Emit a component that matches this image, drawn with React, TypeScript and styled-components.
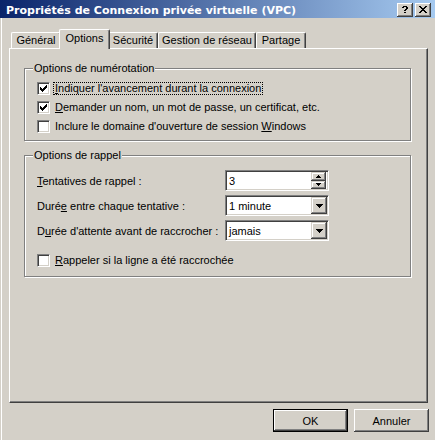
import React from "react";
import styled, { createGlobalStyle } from "styled-components";

const FACE = "#d4d0c8";
const SHADOW = "#808080";
const DARK = "#404040";
const LIGHT = "#ffffff";

const GlobalStyle = createGlobalStyle`
  html, body {
    margin: 0;
    padding: 0;
  }
  body {
    background: ${FACE};
    font-family: "Liberation Sans", Arial, sans-serif;
    font-size: 11px;
    color: #000;
  }
`;

const Window = styled.div`
  width: 435px;
  height: 440px;
  overflow: hidden;
  background: ${FACE};
  display: flex;
  flex-direction: column;
`;

const TitleBar = styled.div`
  box-sizing: border-box;
  height: 18px;
  padding: 2px 4px 0 6px;
  display: flex;
  align-items: center;
  background: linear-gradient(to right, #0a246a, #a6caf0);
  color: #fff;
`;

const TitleText = styled.div`
  flex: 1;
  font-family: "DejaVu Sans", Verdana, sans-serif;
  font-weight: bold;
  font-size: 11px;
  line-height: 13px;
  white-space: nowrap;
`;

const CaptionButtons = styled.div`
  display: flex;
  gap: 2px;
`;

const CaptionButton = styled.div`
  box-sizing: border-box;
  width: 16px;
  height: 14px;
  background: ${FACE};
  box-shadow: inset -1px -1px ${DARK}, inset 1px 1px ${LIGHT},
    inset -2px -2px ${SHADOW};
  display: flex;
  align-items: center;
  justify-content: center;
  padding-bottom: 1px;
`;

const Body = styled.div`
  flex: 1;
  padding: 11px 7px 0 9px;
  box-shadow: inset 1px 0 ${FACE}, inset 2px 0 ${LIGHT};
`;

const TabStrip = styled.div`
  display: flex;
  align-items: flex-end;
  padding-left: 2px;
`;

const Tab = styled.div<{ $active?: boolean; $w: number }>`
  box-sizing: border-box;
  position: relative;
  z-index: ${(p) => (p.$active ? 2 : 1)};
  width: ${(p) => p.$w + (p.$active ? 4 : 0)}px;
  height: ${(p) => (p.$active ? 20 : 16)}px;
  margin: 0 ${(p) => (p.$active ? -2 : 0)}px ${(p) => (p.$active ? -1 : 0)}px;
  padding-bottom: ${(p) => (p.$active ? 3 : 0)}px;
  background: ${FACE};
  border-top: 1px solid ${LIGHT};
  border-left: 1px solid ${LIGHT};
  border-right: 1px solid ${DARK};
  border-radius: 2px 2px 0 0;
  box-shadow: inset -1px 0 ${SHADOW};
  display: flex;
  align-items: center;
  justify-content: center;
  white-space: nowrap;
  line-height: 13px;
`;

const Panel = styled.div`
  box-sizing: border-box;
  width: 419px;
  height: 355px;
  border: 1px solid;
  border-color: ${LIGHT} ${DARK} ${DARK} ${LIGHT};
  box-shadow: inset -1px -1px ${SHADOW};
  padding: 19px 0 0 14px;
`;

const Group = styled.div<{ $gap?: number }>`
  box-sizing: border-box;
  width: 387px;
  margin-top: ${(p) => p.$gap ?? 0}px;
  padding-bottom: ${(p) => (p.$gap ? 6 : 4)}px;
  border: 1px solid ${SHADOW};
  box-shadow: inset 1px 1px ${LIGHT}, 1px 1px ${LIGHT};
`;

const GroupTitle = styled.div<{ $after: number }>`
  width: fit-content;
  margin: -7px 0 ${(p) => p.$after}px 8px;
  padding: 0 1px;
  background: ${FACE};
  line-height: 13px;
  white-space: nowrap;
`;

const Rows = styled.div`
  padding-left: 12px;
`;

const CheckRow = styled.div<{ $gap?: number }>`
  height: 19px;
  margin-top: ${(p) => p.$gap ?? 0}px;
  display: flex;
  align-items: center;
`;

const Box = styled.span`
  box-sizing: border-box;
  flex: none;
  width: 13px;
  height: 13px;
  border: 1px solid;
  border-color: ${SHADOW} ${LIGHT} ${LIGHT} ${SHADOW};
  box-shadow: inset 1px 1px ${DARK}, inset -1px -1px ${FACE};
  background: #fff;
  display: flex;
  align-items: center;
  justify-content: center;
`;

const CheckText = styled.span<{ $focus?: boolean }>`
  margin-left: 3px;
  padding: 0 1px;
  border: 1px dotted ${(p) => (p.$focus ? "#000" : "transparent")};
  line-height: 11px;
  white-space: nowrap;
`;

const FieldRow = styled.div`
  height: 25px;
  display: flex;
  align-items: center;
`;

const FieldLabel = styled.span`
  width: 188px;
  white-space: nowrap;
`;

const Field = styled.div`
  box-sizing: border-box;
  width: 104px;
  height: 21px;
  border: 1px solid;
  border-color: ${SHADOW} ${LIGHT} ${LIGHT} ${SHADOW};
  box-shadow: inset 1px 1px ${DARK}, inset -1px -1px ${FACE};
  background: #fff;
  padding: 1px;
  display: flex;
  align-items: stretch;
`;

const FieldValue = styled.span`
  flex: 1;
  padding-left: 2px;
  padding-top: 1px;
  display: flex;
  align-items: center;
  white-space: nowrap;
`;

const Bevel = styled.div<{ $w: number }>`
  box-sizing: border-box;
  flex: 1 1 0;
  width: ${(p) => p.$w}px;
  background: ${FACE};
  box-shadow: inset -1px -1px ${DARK}, inset 1px 1px ${FACE},
    inset -2px -2px ${SHADOW}, inset 2px 2px ${LIGHT};
  display: flex;
  align-items: center;
  justify-content: center;
`;

const ComboButton = styled(Bevel)`
  flex: none;
`;

const SpinStack = styled.div`
  flex: none;
  display: flex;
  flex-direction: column;
  margin-right: 1px;
`;

const ButtonRow = styled.div`
  display: flex;
  justify-content: flex-end;
  gap: 6px;
  margin: 6px -1px 0 0;
`;

const PushButton = styled.button<{ $default?: boolean }>`
  box-sizing: border-box;
  width: 75px;
  height: 23px;
  padding: 0;
  font: inherit;
  color: #000;
  background: ${FACE};
  border: ${(p) => (p.$default ? "1px solid #000" : "0")};
  box-shadow: inset -1px -1px ${DARK}, inset 1px 1px ${LIGHT},
    inset -2px -2px ${SHADOW};
`;

const Pixels = ({ w, h, cells }: { w: number; h: number; cells: string[] }) => (
  <svg width={w} height={h} viewBox={`0 0 ${w} ${h}`} shapeRendering="crispEdges">
    {cells.map((row, y) =>
      row.split("").map((c, x) =>
        c === "x" ? <rect key={`${x}-${y}`} x={x} y={y} width={1} height={1} fill="#000" /> : null
      )
    )}
  </svg>
);

const CHECK = ["......x", ".....xx", "x...xxx", "xx.xxx.", "xxxxx..", ".xxx...", "..x...."];
const CLOSE = ["xx....xx", ".xx..xx.", "..xxxx..", "...xx...", "..xxxx..", ".xx..xx.", "xx....xx"];
const HELP = [".xxxx.", "xx..xx", "....xx", "...xx.", "..xx..", "......", "..xx.."];
const DOWN = ["xxxxxxx", ".xxxxx.", "..xxx..", "...x..."];
const SMALL_UP = ["..x..", ".xxx.", "xxxxx"];
const SMALL_DOWN = ["xxxxx", ".xxx.", "..x.."];

const Check = ({ on, focus, children, gap }: { on?: boolean; focus?: boolean; children: React.ReactNode; gap?: number }) => (
  <CheckRow $gap={gap}>
    <Box>{on && <Pixels w={7} h={7} cells={CHECK} />}</Box>
    <CheckText $focus={focus}>{children}</CheckText>
  </CheckRow>
);

const Combo = ({ value }: { value: string }) => (
  <Field>
    <FieldValue>{value}</FieldValue>
    <ComboButton $w={16}>
      <Pixels w={7} h={4} cells={DOWN} />
    </ComboButton>
  </Field>
);

const Spin = ({ value }: { value: string }) => (
  <Field>
    <FieldValue>{value}</FieldValue>
    <SpinStack>
      <Bevel $w={15}>
        <Pixels w={5} h={3} cells={SMALL_UP} />
      </Bevel>
      <Bevel $w={15}>
        <Pixels w={5} h={3} cells={SMALL_DOWN} />
      </Bevel>
    </SpinStack>
  </Field>
);

export default function App() {
  return (
    <>
      <GlobalStyle />
      <Window>
        <TitleBar>
          <TitleText>Propriétés de Connexion privée virtuelle (VPC)</TitleText>
          <CaptionButtons>
            <CaptionButton>
              <Pixels w={6} h={7} cells={HELP} />
            </CaptionButton>
            <CaptionButton>
              <Pixels w={8} h={7} cells={CLOSE} />
            </CaptionButton>
          </CaptionButtons>
        </TitleBar>
        <Body>
          <TabStrip>
            <Tab $w={50}>Général</Tab>
            <Tab $w={47} $active>Options</Tab>
            <Tab $w={50}>Sécurité</Tab>
            <Tab $w={98}>Gestion de réseau</Tab>
            <Tab $w={50}>Partage</Tab>
          </TabStrip>
          <Panel>
            <Group>
              <GroupTitle $after={4}>Options de numérotation</GroupTitle>
              <Rows>
                <Check on focus>
                  <u>I</u>ndiquer l'avancement durant la connexion
                </Check>
                <Check on>
                  <u>D</u>emander un nom, un mot de passe, un certificat, etc.
                </Check>
                <Check>
                  Inclure le domaine d'ouverture de session <u>W</u>indows
                </Check>
              </Rows>
            </Group>
            <Group $gap={14}>
              <GroupTitle $after={6}>Options de rappel</GroupTitle>
              <Rows>
                <FieldRow>
                  <FieldLabel>
                    <u>T</u>entatives de rappel :
                  </FieldLabel>
                  <Spin value="3" />
                </FieldRow>
                <FieldRow>
                  <FieldLabel>
                    Duré<u>e</u> entre chaque tentative :
                  </FieldLabel>
                  <Combo value="1 minute" />
                </FieldRow>
                <FieldRow>
                  <FieldLabel>
                    D<u>u</u>rée d'attente avant de raccrocher :
                  </FieldLabel>
                  <Combo value="jamais" />
                </FieldRow>
                <Check gap={8}>
                  <u>R</u>appeler si la ligne a été raccrochée
                </Check>
              </Rows>
            </Group>
          </Panel>
          <ButtonRow>
            <PushButton $default>OK</PushButton>
            <PushButton>Annuler</PushButton>
          </ButtonRow>
        </Body>
      </Window>
    </>
  );
}
